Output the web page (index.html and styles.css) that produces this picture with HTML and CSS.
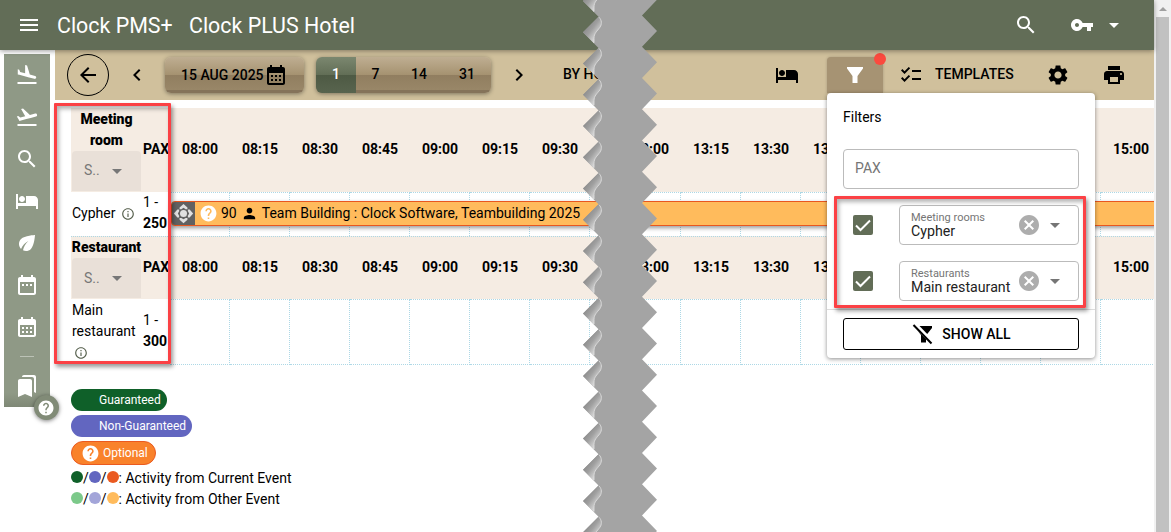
FILE: index.html
```html
<!DOCTYPE html>
<html lang="en">
<head>
    <meta charset="UTF-8">
    <meta name="viewport" content="width=device-width, initial-scale=1.0">
    <title>Clock PMS+</title>
    <link rel="stylesheet" href="styles.css">
</head>
<body>
    <svg class="defs" width="0" height="0">
        <symbol id="i-search" viewBox="0 0 24 24"><path d="M15.5 14h-.79l-.28-.27C15.41 12.59 16 11.11 16 9.5 16 5.91 13.09 3 9.5 3S3 5.91 3 9.5 5.91 16 9.5 16c1.61 0 3.09-.59 4.23-1.57l.27.28v.79l5 4.99L20.49 19l-4.99-5zm-6 0C7.01 14 5 11.99 5 9.5S7.01 5 9.5 5 14 7.01 14 9.5 11.99 14 9.5 14z"/></symbol>
        <symbol id="i-bed" viewBox="0 0 24 24"><path d="M7 13c1.66 0 3-1.34 3-3S8.66 7 7 7s-3 1.34-3 3 1.34 3 3 3zm12-6h-8v7H3V5H1v15h2v-3h18v3h2v-9c0-2.21-1.79-4-4-4z"/></symbol>
        <symbol id="i-month" viewBox="0 0 24 24"><path d="M19 4h-1V2h-2v2H8V2H6v2H5c-1.11 0-1.99.9-1.99 2L3 20c0 1.1.89 2 2 2h14c1.1 0 2-.9 2-2V6c0-1.1-.9-2-2-2zm0 16H5V10h14v10zM9 14H7v-2h2v2zm4 0h-2v-2h2v2zm4 0h-2v-2h2v2zm-8 4H7v-2h2v2zm4 0h-2v-2h2v2zm4 0h-2v-2h2v2z"/></symbol>
        <symbol id="i-help" viewBox="0 0 24 24"><path d="M12 2C6.48 2 2 6.48 2 12s4.48 10 10 10 10-4.48 10-10S17.52 2 12 2zm1 17h-2v-2h2v2zm2.07-7.75l-.9.92C13.45 12.9 13 13.5 13 15h-2v-.5c0-1.1.45-2.1 1.17-2.83l1.24-1.26c.37-.36.59-.86.59-1.41 0-1.1-.9-2-2-2s-2 .9-2 2H8c0-2.21 1.79-4 4-4s4 1.79 4 4c0 .88-.36 1.68-.93 2.25z"/></symbol>
        <symbol id="i-info" viewBox="0 0 24 24"><path d="M11 7h2v2h-2zm0 4h2v6h-2zm1-9C6.48 2 2 6.48 2 12s4.48 10 10 10 10-4.48 10-10S17.52 2 12 2zm0 18c-4.41 0-8-3.59-8-8s3.59-8 8-8 8 3.59 8 8-3.59 8-8 8z"/></symbol>
        <symbol id="i-drop" viewBox="0 0 24 24"><path d="M7 10l5 5 5-5z"/></symbol>
        <symbol id="i-cancel" viewBox="0 0 24 24"><path d="M12 2C6.47 2 2 6.47 2 12s4.47 10 10 10 10-4.47 10-10S17.53 2 12 2zm5 13.59L15.59 17 12 13.41 8.41 17 7 15.59 10.59 12 7 8.41 8.41 7 12 10.59 15.59 7 17 8.41 13.41 12 17 15.59z"/></symbol>
    </svg>

    <header class="header">
        <svg class="icon menu" viewBox="0 0 24 24"><path d="M3 18h18v-2H3v2zm0-5h18v-2H3v2zm0-7v2h18V6H3z"/></svg>
        <span class="brand">Clock PMS+</span>
        <span class="hotel">Clock PLUS Hotel</span>
        <svg class="icon search"><use href="#i-search"/></svg>
        <svg class="icon key" viewBox="0 0 24 24"><path d="M12.65 10C11.83 7.67 9.61 6 7 6c-3.31 0-6 2.69-6 6s2.69 6 6 6c2.61 0 4.83-1.67 5.65-4H17v4h4v-4h2v-4H12.65zM7 14c-1.1 0-2-.9-2-2s.9-2 2-2 2 .9 2 2-.9 2-2 2z"/></svg>
        <svg class="icon caret"><use href="#i-drop"/></svg>
    </header>

    <div class="page">
        <nav class="sidebar">
            <svg class="icon" viewBox="0 0 24 24"><path d="M2.5 19h19v2h-19zm7.18-5.73l4.35 1.16 5.31 1.42c.8.21 1.62-.26 1.84-1.06.21-.8-.26-1.62-1.06-1.84l-5.31-1.42-2.76-9.02L10.12 2v8.28L5.15 8.95l-.93-2.32-1.45-.39v5.17l1.6.43 5.31 1.43z"/></svg>
            <svg class="icon" viewBox="0 0 24 24"><path d="M2.5 19h19v2h-19zm19.57-9.36c-.21-.8-1.04-1.28-1.84-1.06L14.92 10l-6.9-6.43-1.93.51 4.14 7.17-4.97 1.33-1.97-1.54-1.45.39 1.82 3.16.77 1.33 1.6-.43 5.31-1.42 4.35-1.16L21 11.49c.81-.23 1.28-1.05 1.07-1.85z"/></svg>
            <svg class="icon"><use href="#i-search"/></svg>
            <svg class="icon"><use href="#i-bed"/></svg>
            <svg class="icon" viewBox="0 0 24 24"><path d="M6.05 8.05c-2.73 2.73-2.73 7.15-.02 9.88 1.47-3.4 4.09-6.24 7.36-7.93-2.77 2.34-4.71 5.61-5.39 9.32 2.6 1.23 5.8.78 7.95-1.37C19.43 14.47 20 4 20 4S9.53 4.57 6.05 8.05z"/></svg>
            <svg class="icon" viewBox="0 0 24 24"><path d="M9 11H7v2h2v-2zm4 0h-2v2h2v-2zm4 0h-2v2h2v-2zm2-7h-1V2h-2v2H8V2H6v2H5c-1.11 0-1.99.9-1.99 2L3 20c0 1.1.89 2 2 2h14c1.1 0 2-.9 2-2V6c0-1.1-.9-2-2-2zm0 16H5V9h14v11z"/></svg>
            <svg class="icon"><use href="#i-month"/></svg>
            <span class="divider"></span>
            <svg class="icon" viewBox="0 0 24 24"><path d="M19 18l2 1V3c0-1.1-.9-2-2-2H8.99C7.89 1 7 1.9 7 3h10c1.1 0 2 .9 2 2v13zM15 5H5c-1.1 0-2 .9-2 2v16l7-3 7 3V7c0-1.1-.9-2-2-2z"/></svg>
            <span class="help"><svg class="icon"><use href="#i-help"/></svg></span>
        </nav>

        <main class="main">
            <div class="toolbar">
                <span class="back"><svg class="icon" viewBox="0 0 24 24"><path d="M20 11H7.83l5.59-5.59L12 4l-8 8 8 8 1.41-1.41L7.83 13H20v-2z"/></svg></span>
                <svg class="icon prev" viewBox="0 0 24 24"><path d="M15.41 7.41L14 6l-6 6 6 6 1.41-1.41L10.83 12z"/></svg>
                <span class="btn date">15 AUG 2025<svg class="icon"><use href="#i-month"/></svg></span>
                <span class="btn days"><b class="on">1</b><b>7</b><b>14</b><b>31</b></span>
                <svg class="icon next" viewBox="0 0 24 24"><path d="M10 6L8.59 7.41 13.17 12l-4.58 4.59L10 18l6-6z"/></svg>
                <span class="by">BY HOUR</span>
                <svg class="icon rooms"><use href="#i-bed"/></svg>
                <span class="filter-btn">
                    <svg class="icon" viewBox="0 0 24 24"><path d="M4 4h16v1.500L14.500 13v7h-5v-7L4 5.500z"/></svg>
                    <i class="dot"></i>
                </span>
                <svg class="icon list" viewBox="0 0 24 24"><path d="M22 7h-9v2h9V7zm0 8h-9v2h9v-2zM5.54 11L2 7.46l1.41-1.41 2.12 2.12 4.24-4.24 1.41 1.41L5.54 11zm0 8L2 15.46l1.41-1.41 2.12 2.12 4.24-4.24 1.41 1.41L5.54 19z"/></svg>
                <span class="templates">TEMPLATES</span>
                <svg class="icon gear" viewBox="0 0 24 24"><path d="M19.14 12.94c.04-.3.06-.61.06-.94 0-.32-.02-.64-.07-.94l2.03-1.58c.18-.14.23-.41.12-.61l-1.92-3.32c-.12-.22-.37-.29-.59-.22l-2.39.96c-.5-.38-1.03-.7-1.62-.94l-.36-2.54c-.04-.24-.24-.41-.48-.41h-3.84c-.24 0-.43.17-.47.41l-.36 2.54c-.59.24-1.13.57-1.62.94l-2.39-.96c-.22-.08-.47 0-.59.22L2.74 8.87c-.12.21-.08.47.12.61l2.03 1.58c-.05.3-.09.63-.09.94s.02.64.07.94l-2.03 1.58c-.18.14-.23.41-.12.61l1.92 3.32c.12.22.37.29.59.22l2.39-.96c.5.38 1.03.7 1.62.94l.36 2.54c.05.24.24.41.48.41h3.84c.24 0 .44-.17.47-.41l.36-2.54c.59-.24 1.13-.56 1.62-.94l2.39.96c.22.08.47 0 .59-.22l1.92-3.32c.12-.22.07-.47-.12-.61l-2.01-1.58zM12 15.6c-1.98 0-3.6-1.62-3.6-3.6s1.62-3.6 3.6-3.6 3.6 1.62 3.6 3.6-1.62 3.6-3.6 3.6z"/></svg>
                <svg class="icon" viewBox="0 0 24 24"><path d="M19 8H5c-1.66 0-3 1.34-3 3v6h4v4h12v-4h4v-6c0-1.66-1.34-3-3-3zm-3 11H8v-5h8v5zm3-7c-.55 0-1-.45-1-1s.45-1 1-1 1 .45 1 1-.45 1-1 1zm-1-9H6v4h12V3z"/></svg>
            </div>

            <div class="schedule">
                <div class="row head meeting">
                    <div class="name"><strong>Meeting room</strong><span class="select">S..<svg class="icon"><use href="#i-drop"/></svg></span></div>
                    <div class="pax">PAX</div>
                    <div>08:00</div><div>08:15</div><div>08:30</div><div>08:45</div><div>09:00</div><div>09:15</div><div>09:30</div><div></div>
                    <div>13:00</div><div>13:15</div><div>13:30</div><div>13:45</div><div></div><div></div><div></div><div></div><div>15:00</div>
                </div>
                <div class="row cells cypher">
                    <div class="name">Cypher <svg class="icon info"><use href="#i-info"/></svg></div>
                    <div class="pax">1 -<br><b>250</b></div>
                    <div></div><div></div><div></div><div></div><div></div><div></div><div></div><div></div>
                    <div></div><div></div><div></div><div></div><div></div><div></div><div></div><div></div><div></div>
                    <div class="event">
                        <span class="handle"><svg viewBox="0 0 24 24"><circle cx="12" cy="12" r="4"/><path d="M12 1l4.500 4v2h-2L12 5.500 9.500 7h-2V5zM12 23l4.500-4v-2h-2L12 18.500 9.500 17h-2v2zM1 12l4-4.500h2v2L5.500 12 7 14.500v2H5zM23 12l-4-4.500h-2v2l1.500 2.500-1.500 2.500v2h2z"/></svg></span>
                        <svg class="icon q"><use href="#i-help"/></svg>
                        <span>90</span>
                        <svg class="icon person" viewBox="0 0 24 24"><path d="M12 12c2.210 0 4-1.790 4-4s-1.790-4-4-4-4 1.790-4 4 1.790 4 4 4zm0 2c-2.670 0-8 1.340-8 4v2h16v-2c0-2.660-5.330-4-8-4z"/></svg>
                        <span>Team Building : Clock Software, Teambuilding 2025</span>
                    </div>
                </div>
                <div class="row head rest">
                    <div class="name"><strong>Restaurant</strong><span class="select">S..<svg class="icon"><use href="#i-drop"/></svg></span></div>
                    <div class="pax">PAX</div>
                    <div>08:00</div><div>08:15</div><div>08:30</div><div>08:45</div><div>09:00</div><div>09:15</div><div>09:30</div><div></div>
                    <div>13:00</div><div>13:15</div><div>13:30</div><div>13:45</div><div></div><div></div><div></div><div></div><div>15:00</div>
                </div>
                <div class="row cells mainrest">
                    <div class="name">Main restaurant <svg class="icon info"><use href="#i-info"/></svg></div>
                    <div class="pax">1 -<br><b>300</b></div>
                    <div></div><div></div><div></div><div></div><div></div><div></div><div></div><div></div>
                    <div></div><div></div><div></div><div></div><div></div><div></div><div></div><div></div><div></div>
                </div>
            </div>

            <div class="legend">
                <span class="pill guaranteed">Guaranteed</span>
                <span class="pill non">Non-Guaranteed</span>
                <span class="pill optional"><svg class="icon"><use href="#i-help"/></svg>Optional</span>
                <p><i class="c green"></i>/<i class="c violet"></i>/<i class="c red"></i>: Activity from Current Event</p>
                <p><i class="c lgreen"></i>/<i class="c lviolet"></i>/<i class="c lorange"></i>: Activity from Other Event</p>
            </div>
        </main>
    </div>

    <div class="popup">
        <div class="popup-body">
            <h4>Filters</h4>
            <div class="field pax-field">PAX</div>
            <div class="line">
                <svg class="check" viewBox="0 0 20 20"><path d="M3 10.500l4.500 4.500L17 5.500"/></svg>
                <div class="field"><div class="value"><small>Meeting rooms</small>Cypher</div><svg class="icon x"><use href="#i-cancel"/></svg><svg class="icon"><use href="#i-drop"/></svg></div>
            </div>
            <div class="line">
                <svg class="check" viewBox="0 0 20 20"><path d="M3 10.500l4.500 4.500L17 5.500"/></svg>
                <div class="field"><div class="value"><small>Restaurants</small>Main restaurant</div><svg class="icon x"><use href="#i-cancel"/></svg><svg class="icon"><use href="#i-drop"/></svg></div>
            </div>
        </div>
        <div class="popup-foot">
            <span class="show-all"><svg class="icon" viewBox="0 0 24 24"><path d="M8.500 4H21v2l-4.800 6z"/><path d="M6.500 8.500L15 17v3.500h-5v-7.500z"/><path class="slash" d="M2.500 3l18 18.500"/></svg>SHOW ALL</span>
        </div>
    </div>

    <div class="mark mark-rows"></div>
    <div class="mark mark-filters"></div>

    <!-- torn strip between the two halves of the schedule -->
    <svg class="tear" width="80" height="532" viewBox="580 0 80 532">
        <defs>
            <linearGradient id="curl" gradientUnits="userSpaceOnUse" x1="586" y1="-5" x2="598" y2="4">
                <stop offset="0" stop-color="#8c8c8c"/>
                <stop offset=".4" stop-color="#a0a0a0"/>
                <stop offset="1" stop-color="#dcdcdc"/>
            </linearGradient>
        </defs>
        <g id="teeth"></g>
    </svg>

    <div class="scrollbar"><i class="up"></i><i class="thumb"></i></div>

    <script>
        var teeth=document.getElementById("teeth"),
            step=31.25,
            left="",
            right="",
            curls="";

        for(let i=-1;i<18;i++){
            let l=1+i*step;
            let r=-0.25+i*step;
            left+=" 583,"+l+" 598.5,"+(l+step/2);
            // right edge runs bottom to top to close the shape
            right=" 642,"+(r+step/2)+" 657,"+r+right;
            curls+='<g transform="translate(0 '+l+')">'
                +'<path fill="url(#curl)" d="M583 0L598.500 -15.600C602 -13 602 -8 600 -5C597 -1 594 1 594 6V11z"/>'
                +'<path fill="none" stroke="#d8d8d8" d="M599 -15C602 -12 602 -8 600 -5C597 -1 594 1 594 6V10.500"/></g>';
        }

        teeth.innerHTML='<polygon fill="#a4a4a4" points="'+left+right+'"/>'+curls;
    </script>
</body>
</html>
```
FILE: styles.css
```css
*{
    margin:0;
    padding:0;
    box-sizing:border-box;
}
body{
    position:relative;
    width:1171px;
    height:532px;
    overflow:hidden;
    background:#fff;
    font:14px/21px Roboto, sans-serif;
    color:#000;
}
.defs{
    position:absolute;
}
.icon{
    width:24px;
    height:24px;
    flex:none;
    fill:currentColor;
}

/* header */
.header{
    position:relative;
    z-index:1;
    display:flex;
    align-items:center;
    width:1154px;
    height:50px;
    padding-left:17px;
    background:#626d57;
    color:#fff;
    font-size:21.4px;
    box-shadow:0 1px 5px rgba(0,0,0,.4);
}
.brand{
    width:132px;
    margin-left:16px;
    white-space:nowrap;
}
.header .search{
    margin-left:auto;
}
.header .key{
    margin-left:32px;
}
.header .caret{
    margin:0 28px 0 8px;
}

.page{
    display:flex;
    width:1154px;
}

/* sidebar */
.sidebar{
    position:relative;
    display:flex;
    flex-direction:column;
    align-items:center;
    gap:18px;
    flex:none;
    width:46px;
    height:353px;
    margin:4px 5px 0 4px;
    padding-top:9px;
    background:linear-gradient(#8f9986 96%,#7f8876);
    color:#fff;
}
.sidebar .divider{
    width:14px;
    height:1px;
    margin:-1px 0;
    background:#bcc2b6;
}
.sidebar .help{
    position:absolute;
    left:30px;
    bottom:-13px;
    display:flex;
    align-items:center;
    justify-content:center;
    width:25px;
    height:25px;
    border-radius:50%;
    background:#818b77;
    box-shadow:0 1px 4px rgba(0,0,0,.5);
}
.sidebar .help .icon{
    width:18px;
    height:18px;
    margin-right:1px;
}

/* toolbar */
.main{
    flex:1;
    min-width:0;
}
.toolbar{
    display:flex;
    align-items:center;
    height:50px;
    padding-left:12px;
    background:#d0c09c;
    font-weight:500;
    line-height:19px;
    white-space:nowrap;
}
.back{
    display:flex;
    align-items:center;
    justify-content:center;
    width:42px;
    height:42px;
    border:1px solid #000;
    border-radius:50%;
}
.prev{
    margin-left:16px;
}
.btn{
    display:flex;
    align-items:center;
    height:36px;
    border-radius:6px;
    background:linear-gradient(#bfae92 0,#a59270 50%,#917e60 51%,#998768 92%,#85735a 93%,#85735a 100%);
    box-shadow:0 1px 4px rgba(0,0,0,.4);
}
.date{
    width:139px;
    margin-left:16px;
    padding-left:16px;
}
.days{
    width:175px;
    margin-left:12px;
    overflow:hidden;
}
.days b{
    width:48px;
    padding-bottom:1px;
    font-weight:500;
    text-align:center;
}
.days b:nth-child(2){
    width:39px;
}
.days .on{
    width:40px;
    height:36px;
    line-height:35px;
    color:#fff;
    background:linear-gradient(#7b876f 0,#626e56 50%,#4e5a44 51%,#58644e 100%);
}
.next{
    margin-left:16px;
}
.by{
    width:100px;
    margin-left:32px;
    padding-bottom:1px;
}
.rooms{
    margin-left:112px;
}
.filter-btn{
    position:relative;
    display:flex;
    justify-content:center;
    align-items:center;
    width:56px;
    height:36px;
    margin:0 16px 0 28px;
    border-radius:4px 4px 0 0;
    background:#a69373;
    color:#fff;
    box-shadow:0 0 3px rgba(0,0,0,.2);
}
.dot{
    position:absolute;
    right:-3px;
    top:-4px;
    width:12px;
    height:12px;
    border-radius:50%;
    background:#fb4a3e;
}
.templates{
    width:79px;
    margin-left:12px;
    padding-bottom:1px;
}
.gear{
    margin:0 32px;
}

/* schedule */
.schedule{
    margin:8px 0 0 16px;
    overflow:hidden;
}
.row{
    position:relative;
    display:grid;
    grid-template-columns:71px 28px repeat(7,60px) 31px repeat(9,60px);
}
.meeting{
    height:84px;
}
.cypher{
    height:44px;
}
.rest{
    height:63px;
}
.mainrest{
    height:66px;
}
.head{
    background:#f5ece3;
    font-weight:700;
    text-align:center;
    align-items:center;
}
.head > div{
    padding-bottom:1px;
}
.head .pax{
    padding-left:1px;
    text-align:left;
}
.head .select{
    display:flex;
    align-items:center;
    width:69px;
    height:40px;
    margin-left:1px;
    padding-left:12px;
    background:#e9e0d8;
    border-radius:4px 4px 0 0;
    color:#777;
    font-weight:400;
}
.head .select .icon{
    margin-left:5px;
}
.head strong{
    display:block;
}
.cells > div{
    border-top:1px dotted #add8e6;
    border-right:1px dotted #add8e6;
    border-bottom:1px dotted #add8e6;
}
.cypher > div{
    border-bottom:0;
}
.rest{
    border-top:1px dotted #add8e6;
}
.cells .name,
.cells .pax{
    align-self:center;
    padding:0 0 2px 1px;
    border:0;
}
.info{
    width:14px;
    height:14px;
    margin-left:2px;
    vertical-align:-3px;
    color:#555f4c;
}
.cells .event{
    position:absolute;
    left:100px;
    top:9px;
    display:flex;
    align-items:center;
    width:1000px;
    height:25px;
    border:1px solid #e8571f;
    border-radius:4px;
    background:#ffbb5c;
    box-shadow:0 2px 4px rgba(0,0,0,.4);
    white-space:nowrap;
}
.handle{
    display:flex;
    align-items:center;
    justify-content:center;
    width:23px;
    height:23px;
    background:#616161;
    border-radius:3px 0 0 3px;
}
.handle svg{
    width:21px;
    height:21px;
    fill:#e0e0e0;
}
.event .q{
    width:19px;
    height:19px;
    margin:0 3px 0 4px;
    color:#fff;
}
.event .person{
    width:17px;
    height:17px;
    margin:0 4px;
}

/* legend */
.legend{
    display:flex;
    flex-direction:column;
    align-items:flex-start;
    padding:24px 0 0 16px;
}
.pill{
    display:flex;
    align-items:center;
    height:22px;
    margin-bottom:4px;
    padding:0 6px 0 28px;
    border-radius:12px;
    color:#fff;
    font-size:12px;
}
.guaranteed{
    background:#0f6029;
}
.non{
    background:#6266c0;
}
.optional{
    height:24px;
    margin-bottom:3px;
    padding:0 7px 0 9px;
    border:1px solid #ea5a20;
    background:#f9822b;
}
.optional .icon{
    width:19px;
    height:19px;
    margin-right:3px;
}
.c{
    display:inline-block;
    width:12px;
    height:12px;
    border-radius:50%;
}
.green{ background:#0f6029; }
.violet{ background:#6266c0; }
.red{ background:#ea5a20; }
.lgreen{ background:#7cc98a; }
.lviolet{ background:#a3a5d9; }
.lorange{ background:#ffbb5c; }

/* filters popup */
.popup{
    position:absolute;
    z-index:2;
    left:827px;
    top:93px;
    width:268px;
    height:265px;
    border-radius:4px;
    background:#fff;
    box-shadow:0 1px 4px rgba(0,0,0,.45);
}
.popup-body{
    height:217px;
    padding:14px 16px 0;
    border-bottom:1px solid #ddd;
}
.popup h4{
    margin-bottom:21px;
    font-weight:400;
}
.field{
    display:flex;
    align-items:center;
    height:40px;
    padding:0 11px 1px;
    border:1px solid #bbb;
    border-radius:4px;
    color:#757575;
}
.line{
    display:flex;
    align-items:center;
    margin-top:16px;
    padding-left:10px;
}
.check{
    width:20px;
    height:20px;
    margin-right:26px;
    border-radius:2px;
    background:#626d57;
    fill:none;
    stroke:#fff;
    stroke-width:2;
}
.line .field{
    width:180px;
    padding-bottom:0;
}
.value{
    width:105px;
    padding-bottom:1px;
    color:#222;
    font-size:14.2px;
    line-height:15px;
    white-space:nowrap;
}
.value small{
    display:block;
    font-size:11px;
    line-height:13px;
    color:#757575;
}
.field .x{
    margin:0 2px;
    color:#adadad;
}
.popup-foot{
    padding:8px 16px;
}
.show-all{
    display:flex;
    align-items:center;
    justify-content:center;
    gap:7px;
    height:32px;
    border:1px solid #000;
    border-radius:3px;
    font-weight:500;
    line-height:20px;
}
.slash{
    stroke:#000;
    stroke-width:2;
}

/* red callouts */
.mark{
    position:absolute;
    z-index:3;
    border:3px solid #fb4145;
    border-radius:1px;
    box-shadow:2px 3px 4px rgba(0,0,0,.4), inset 2px 3px 4px rgba(0,0,0,.3);
}
.mark-rows{
    left:54px;
    top:103px;
    width:117px;
    height:261px;
}
.mark-filters{
    left:834px;
    top:196px;
    width:252px;
    height:112px;
}

.tear{
    position:absolute;
    z-index:4;
    left:580px;
    top:0;
}

.scrollbar{
    position:absolute;
    right:0;
    top:0;
    display:flex;
    flex-direction:column;
    align-items:center;
    width:17px;
    height:532px;
    background:#f1f1f1;
}
.up{
    height:11px;
    border:4px solid transparent;
    border-top:0;
    border-bottom:4px solid #a0a0a0;
    margin:0 0 6px;
}
.thumb{
    width:13px;
    flex:1;
    background:#c1c1c1;
}
```
